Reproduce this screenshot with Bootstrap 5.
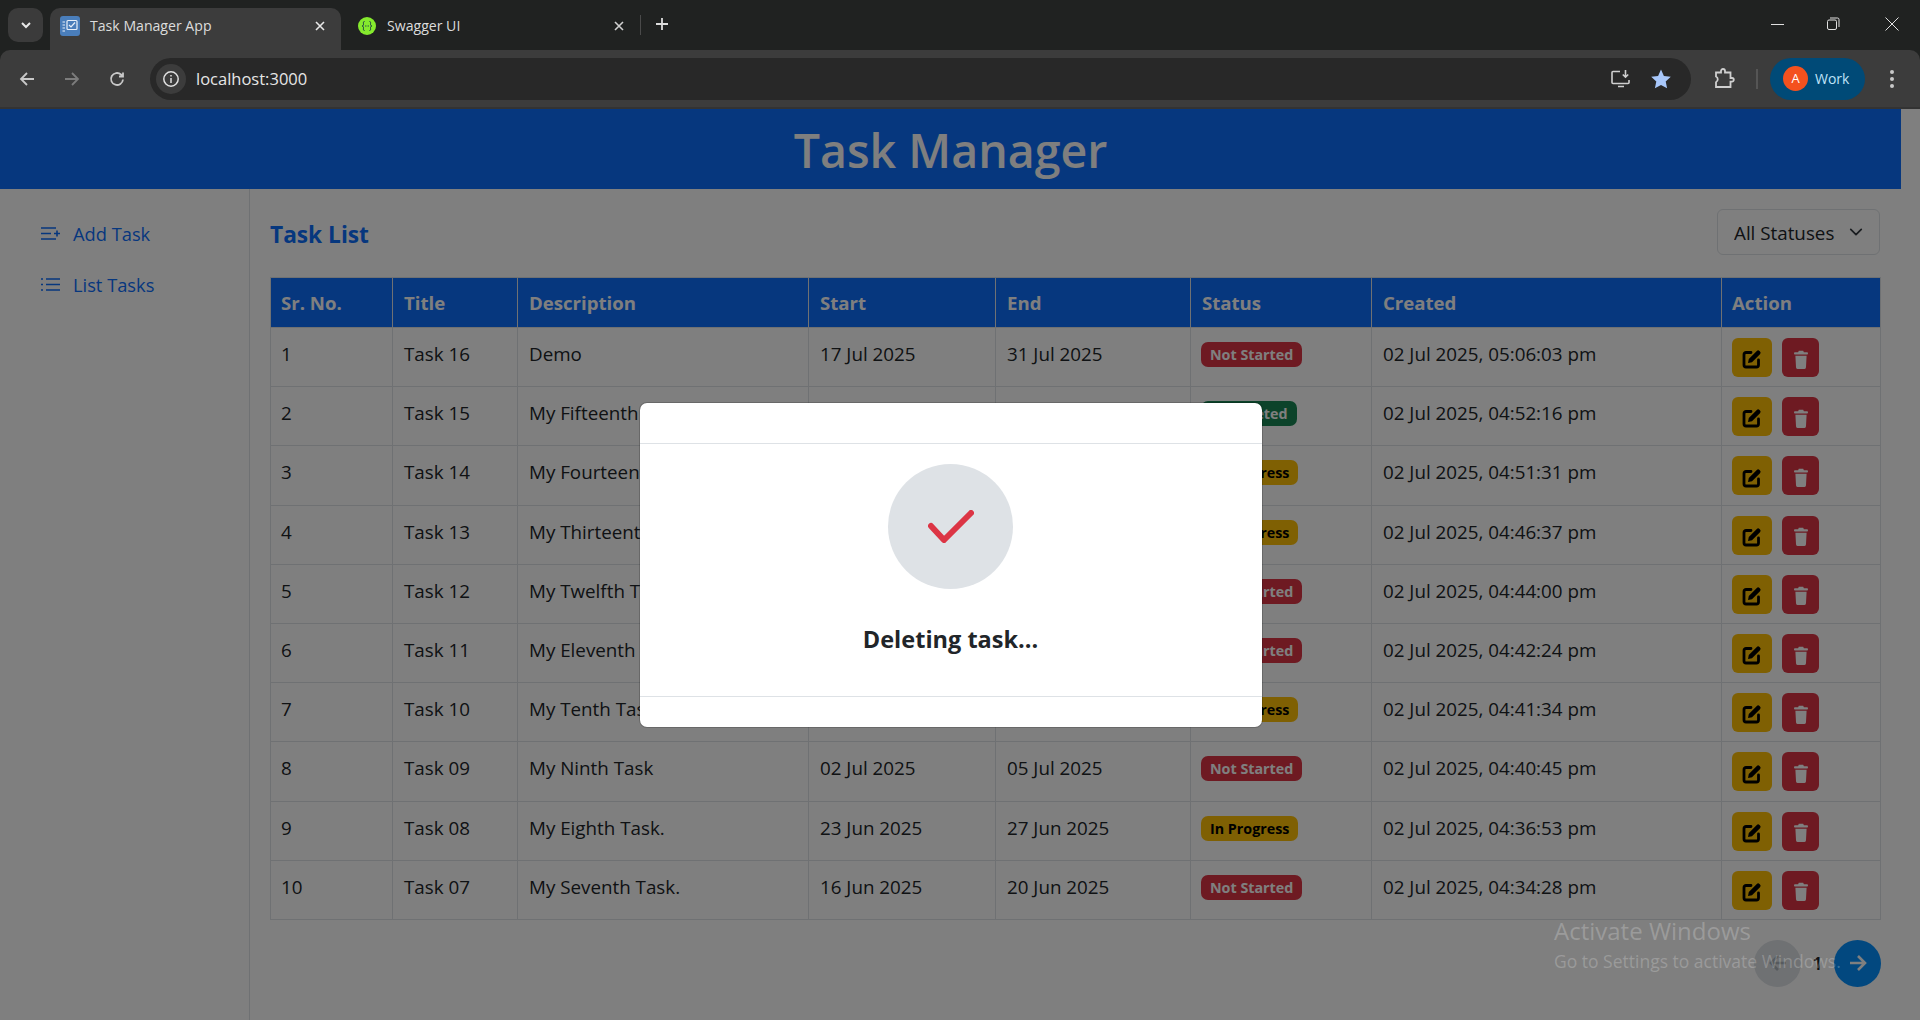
<!DOCTYPE html>
<html lang="en">
<head>
    <meta charset="UTF-8">
    <meta name="viewport" content="width=device-width, initial-scale=1.0">
    <title>Task Manager App</title>
    <link href="https://cdn.jsdelivr.net/npm/bootstrap@5.3.0/dist/css/bootstrap.min.css" rel="stylesheet">
    <style>
        html, body {
            height: 100%;
            overflow: hidden;
        }

        body {
            font-family: "Open Sans", "Liberation Sans", sans-serif;
            font-size: 18.8px;
            background: #202221;
        }

        /* browser frame */
        .tab-strip {
            height: 50px;
            background: #202221;
            color: #dcdcdc;
            font-size: 14.1px;
            padding-left: 8px;
        }

        .tab-menu {
            width: 35px;
            height: 34px;
            margin-top: 8px;
            border-radius: 10px;
            background: #3b3b3b;
        }

        .tab-item {
            width: 291px;
            height: 42px;
            margin-top: 8px;
            padding: 0 15px 6px 10px;
        }

        .tab-active {
            margin-left: 7px;
            background: #3c3c3c;
            border-radius: 10px 10px 0 0;
        }

        .tab-second {
            width: 293px;
            padding-left: 17px;
            padding-right: 9px;
        }

        .tab-title {
            margin-left: 10px;
        }

        .tab-second .tab-title {
            margin-left: 11px;
        }

        .tab-favicon {
            width: 20px;
            height: 20px;
            border-radius: 3px;
            background: #4a7ebb;
        }

        .tab-divider {
            width: 1px;
            height: 20px;
            margin: 15px 8px 0 6px;
            background: #4a4a4a;
        }

        .tab-plus {
            margin-top: 11px;
        }

        .win-buttons {
            margin-left: auto;
            gap: 41px;
            padding-right: 21px;
            margin-top: 17px;
        }

        .win-close {
            margin-left: 4px;
        }

        .tool-bar {
            height: 59px;
            background: #3c3c3c;
            border-bottom: 2px solid #333;
            border-radius: 10px 10px 0 0;
            padding: 0 16px 0 18px;
        }

        .tool-nav {
            gap: 27px;
            width: 132px;
        }

        .omnibox {
            width: 1541px;
            height: 42px;
            border-radius: 21px;
            background: #282828;
            color: #e6e6e6;
            font-size: 16.5px;
            padding: 0 19px 0 6px;
        }

        .omni-text {
            padding-top: 1px;
        }

        .info-chip {
            width: 30px;
            height: 30px;
            border-radius: 50%;
            background: #3c3c3c;
            margin-right: 10px;
        }

        .omni-right {
            margin-left: auto;
            gap: 18px;
        }

        .ext-icon {
            margin-left: 22px;
        }

        .tool-sep {
            width: 2px;
            height: 20px;
            margin: 0 12px 0 21px;
            background: #555;
        }

        .work-pill {
            width: 95px;
            height: 42px;
            border-radius: 21px;
            background: #004a77;
            color: #bfe3f7;
            font-size: 14px;
            padding-left: 13px;
            gap: 7px;
        }

        .work-avatar {
            width: 25px;
            height: 25px;
            border-radius: 50%;
            background: #f4511e;
            color: #fff;
            font-size: 13px;
        }

        .more-dots {
            margin-left: 24px;
        }

        /* the page itself */
        .page-view {
            position: relative;
            height: 911px;
            overflow: hidden;
            padding-right: 19px;
            background: #fff;
        }

        .page-head {
            height: 80px;
            padding-top: 4px;
            font-size: 46.5px;
            font-weight: 600;
        }

        .page-head h1 {
            font-size: inherit;
            font-weight: inherit;
            margin: 0;
        }

        .side-col {
            width: 250px;
            flex: none;
            padding-top: 19px;
            height: 831px;
        }

        .side-link {
            height: 51px;
            padding-left: 41px;
            gap: 13px;
            font-size: 18.3px;
        }

        .main-col {
            padding: 20px 21px 0 20px;
            min-width: 0;
        }

        .list-title {
            font-size: 22.7px;
            font-weight: 700;
            margin: 0;
            padding-top: 5px;
        }

        .status-filter {
            width: 163px;
            height: 46px;
            font-size: 18.8px;
            padding: 3px 36px 0 16px;
            background-position: right 14px center;
            background-size: 18px 14px;
        }

        .task-table {
            table-layout: fixed;
            margin: 22px 0 20px;
            --bs-table-border-color: #dee2e6;
        }

        .task-table th {
            height: 50px;
            padding: 0 10px 0 11px;
            vertical-align: middle;
            background: #0d6efd;
            color: #fff;
            font-size: 18.6px;
            font-weight: 700;
        }

        .task-table td {
            height: 59.2px;
            padding: 12px 10px 0 11px;
            vertical-align: top;
            font-size: 18.8px;
            line-height: 28px;
            white-space: nowrap;
            overflow: hidden;
        }

        .task-table th:first-child,
        .task-table td:first-child {
            padding-left: 10px;
        }

        .task-table td.action-cell {
            padding-top: 10px;
            padding-left: 10px;
            line-height: 0;
        }

        .task-table th:last-child {
            padding-left: 10px;
        }

        .task-badge {
            font-size: 14.3px;
            padding: 0 9px;
            line-height: 25px;
            height: 25px;
            margin-top: 2px;
            margin-left: -1px;
            border-radius: 7px;
            vertical-align: top;
        }

        .act-btn {
            height: 39px;
            padding: 0;
            margin-right: 10px;
            border: 0;
            border-radius: 6px;
            vertical-align: top;
        }

        .act-edit {
            width: 40px;
        }

        .act-del {
            width: 37px;
        }

        .pager {
            gap: 11px;
            margin-right: -1px;
        }

        .pager-btn {
            width: 47px;
            height: 47px;
            border-radius: 50%;
            border: 0;
            padding: 0;
        }

        .pager-prev {
            background: #dee2e6;
        }

        .pager-next {
            background: #0490ff;
        }

        /* modal sits inside the page area, not the window */
        .page-view .modal-backdrop {
            position: absolute;
            width: 100%;
            height: 100%;
        }

        .page-view .modal {
            position: absolute;
            padding-right: 19px;
        }

        .page-view .modal-dialog {
            max-width: 624px;
            width: 624px;
            height: 100%;
            min-height: 0;
            margin: 0 auto;
        }

        .delete-head {
            height: 41px;
            padding: 0;
        }

        .delete-body {
            height: 252px;
            flex: none;
            padding: 20px 0 0;
        }

        .delete-foot {
            height: 31px;
            padding: 0;
        }

        .delete-circle {
            width: 125px;
            height: 125px;
            border-radius: 50%;
            background: #dee2e6;
        }

        .delete-text {
            margin: 33px 0 0;
            font-size: 23.5px;
            line-height: 35px;
            font-weight: 700;
            color: #212529;
        }

        .activate-note {
            position: absolute;
            left: 1554px;
            top: 804px;
            z-index: 2000;
            color: rgba(255, 255, 255, .22);
            font-size: 17.5px;
            line-height: 26px;
            white-space: nowrap;
            pointer-events: none;
        }

        .activate-note div:first-child {
            font-size: 24px;
            line-height: 35px;
        }
    </style>
</head>
<body>
    <svg width="0" height="0" class="d-block">
        <symbol id="ico-edit" viewBox="0 0 20 20">
            <path d="M9 3.5H4A2 2 0 0 0 2 5.5V16a2 2 0 0 0 2 2h10.500a2 2 0 0 0 2-2v-5" fill="none" stroke="currentColor" stroke-width="2.8" stroke-linecap="round"/>
            <path d="M6 14l.8-4L14.800 2a1.900 1.900 0 0 1 2.700 0l.5.5a1.900 1.900 0 0 1 0 2.700L10 13.200z" fill="currentColor"/>
        </symbol>
        <symbol id="ico-trash" viewBox="0 0 16 18" preserveAspectRatio="none">
            <path d="M5.5.8h5L11.300 2.200H15a1 1 0 0 1 0 2H1a1 1 0 0 1 0-2h3.700z" fill="currentColor"/>
            <path d="M1.600 5.400h12.800l-.7 10.900A1.700 1.700 0 0 1 12 18H4a1.700 1.700 0 0 1-1.700-1.700z" fill="currentColor"/>
        </symbol>
    </svg>

    <!-- browser frame -->
    <div class="tab-strip d-flex align-items-start">
        <div class="tab-menu d-flex align-items-center justify-content-center">
            <svg width="12" height="12" viewBox="0 0 12 12"><path d="M2 4l4 4 4-4" fill="none" stroke="#e8e8e8" stroke-width="2"/></svg>
        </div>
        <div class="tab-item tab-active d-flex align-items-center">
            <span class="tab-favicon d-flex align-items-center justify-content-center">
                <svg width="18" height="18" viewBox="0 0 18 18" fill="none" stroke="#e8f0fa" stroke-width="1.2"><path d="M1.5 5h2.5M1.5 8h2.5M1.5 11h2.5M1.5 14h2.5"/><rect x="6" y="3.5" width="10" height="9" rx="1"/><path d="M8 8l2 2 4-4.500"/></svg>
            </span>
            <span class="tab-title">Task Manager App</span>
            <svg class="ms-auto" width="12" height="12" viewBox="0 0 12 12"><path d="M2 2l8 8M10 2l-8 8" stroke="#e8e8e8" stroke-width="1.6"/></svg>
        </div>
        <div class="tab-item tab-second d-flex align-items-center">
            <svg width="18" height="18" viewBox="0 0 18 18"><circle cx="9" cy="9" r="9" fill="#85ea2d"/><path d="M6.500 4.500C5 4.500 5.500 6 5.500 7.500S4 9 4 9s1.500 0 1.500 1.500-.5 3 1 3M11.500 4.500c1.500 0 1 1.500 1 3S14 9 14 9s-1.500 0-1.500 1.500.5 3-1 3" fill="none" stroke="#173647" stroke-width="1"/><path d="M7 9h.8M8.600 9h.8M10.200 9h.8" stroke="#173647" stroke-width="1"/></svg>
            <span class="tab-title">Swagger UI</span>
            <svg class="ms-auto" width="12" height="12" viewBox="0 0 12 12"><path d="M2 2l8 8M10 2l-8 8" stroke="#d0d0d0" stroke-width="1.6"/></svg>
        </div>
        <div class="tab-divider"></div>
        <svg class="tab-plus" width="26" height="26" viewBox="0 0 26 26"><path d="M13 7v12M7 13h12" stroke="#dcdcdc" stroke-width="1.8"/></svg>
        <div class="win-buttons d-flex align-items-center">
            <svg width="14" height="14" viewBox="0 0 14 14"><path d="M0 7.500h13" stroke="#e0e0e0" stroke-width="1"/></svg>
            <svg width="14" height="14" viewBox="0 0 14 14" fill="none" stroke="#e0e0e0"><rect x="1.5" y="3" width="9" height="9.5" rx="1.5"/><path d="M4 1h7.500A1.500 1.500 0 0 1 13 2.500V10"/></svg>
            <svg class="win-close" width="14" height="14" viewBox="0 0 14 14"><path d="M.5.5l13 13M13.500.5l-13 13" stroke="#e0e0e0" stroke-width="1"/></svg>
        </div>
    </div>
    <div class="tool-bar d-flex align-items-center">
        <div class="tool-nav d-flex align-items-center">
            <svg width="18" height="18" viewBox="0 0 18 18" fill="none" stroke="#c8c8c8" stroke-width="1.8"><path d="M16 9H3M9 3L3 9l6 6"/></svg>
            <svg width="18" height="18" viewBox="0 0 18 18" fill="none" stroke="#7c7c7c" stroke-width="1.8"><path d="M2 9h13M9 3l6 6-6 6"/></svg>
            <svg width="18" height="18" viewBox="0 0 18 18" fill="none" stroke="#c8c8c8" stroke-width="1.8"><path d="M15 9.500A6 6 0 1 1 13 4.500L15 6.500M15 2.500v4h-4"/></svg>
        </div>
        <div class="omnibox d-flex align-items-center">
            <span class="info-chip d-flex align-items-center justify-content-center">
                <svg width="18" height="18" viewBox="0 0 18 18" fill="none" stroke="#e0e0e0" stroke-width="1.5"><circle cx="9" cy="9" r="7.2"/><path d="M9 8v5M9 5v1.500"/></svg>
            </span>
            <span class="omni-text">localhost:3000</span>
            <div class="omni-right d-flex align-items-center">
                <svg width="22" height="22" viewBox="0 0 22 22" fill="none" stroke="#cfcfcf" stroke-width="1.6"><path d="M10 3.500H3A1 1 0 0 0 2 4.500v10a1 1 0 0 0 1 1h15a1 1 0 0 0 1-1V12M8 18.500h6"/><path d="M15.500 2v7M12.800 6.500l2.700 2.700 2.700-2.700"/></svg>
                <svg width="22" height="22" viewBox="0 0 22 22"><path d="M11 1.500l2.900 6.400 6.900.8-5.100 4.700 1.400 6.900L11 16.900l-6.100 3.400 1.400-6.900L1.200 8.700l6.900-.8z" fill="#a8c7fa"/></svg>
            </div>
        </div>
        <svg class="ext-icon" width="22" height="22" viewBox="0 0 22 22" fill="none" stroke="#cfcfcf" stroke-width="1.8"><path d="M3 4.500h5V3a2 2 0 0 1 4 0v1.500h5.500V10H19a1.800 1.800 0 0 1 0 3.600h-1.500V19H3v-4.800a3.200 3.200 0 0 0 0-5.700z"/></svg>
        <div class="tool-sep"></div>
        <div class="work-pill d-flex align-items-center">
            <span class="work-avatar d-flex align-items-center justify-content-center">A</span>
            <span>Work</span>
        </div>
        <svg class="more-dots" width="6" height="20" viewBox="0 0 6 20" fill="#c8c8c8"><circle cx="3" cy="3" r="2"/><circle cx="3" cy="10" r="2"/><circle cx="3" cy="17" r="2"/></svg>
    </div>

    <!-- page -->
    <div class="page-view">
        <header class="page-head bg-primary text-white d-flex align-items-center justify-content-center">
            <h1>Task Manager</h1>
        </header>
        <div class="d-flex">
            <nav class="side-col border-end">
                <a href="#" class="side-link d-flex align-items-center text-primary text-decoration-none">
                    <svg width="19" height="15" viewBox="0 0 19 15" fill="none" stroke="currentColor" stroke-width="1.6"><path d="M0 2h15M0 7.500h10M0 13h15M13 7.500h6M16 4.500v6"/></svg>
                    <span>Add Task</span>
                </a>
                <a href="#" class="side-link d-flex align-items-center text-primary text-decoration-none">
                    <svg width="19" height="15" viewBox="0 0 19 15" fill="none" stroke="currentColor" stroke-width="1.6"><path d="M5 2h14M5 7.500h14M5 13h14M0 2h2M0 7.500h2M0 13h2"/></svg>
                    <span>List Tasks</span>
                </a>
            </nav>
            <main class="main-col flex-grow-1">
                <div class="d-flex align-items-center justify-content-between">
                    <h2 class="list-title text-primary">Task List</h2>
                    <select class="form-select status-filter">
                        <option>All Statuses</option>
                        <option>Not Started</option>
                        <option>In Progress</option>
                        <option>Completed</option>
                    </select>
                </div>
                <table class="table table-bordered task-table">
                    <colgroup>
                        <col width="122"><col width="125"><col width="291"><col width="187"><col width="195"><col width="181"><col width="350"><col width="159">
                    </colgroup>
                    <thead>
                        <tr><th>Sr. No.</th><th>Title</th><th>Description</th><th>Start</th><th>End</th><th>Status</th><th>Created</th><th>Action</th></tr>
                    </thead>
                    <tbody id="taskRows"></tbody>
                </table>
                <div class="pager d-flex align-items-center justify-content-end">
                    <button class="pager-btn pager-prev d-flex align-items-center justify-content-center">
                        <svg width="20" height="20" viewBox="0 0 20 20" fill="none" stroke="#adb5bd" stroke-width="2.6"><path d="M18 10H3M10 3l-7 7 7 7"/></svg>
                    </button>
                    <span class="fw-semibold">1</span>
                    <button class="pager-btn pager-next d-flex align-items-center justify-content-center">
                        <svg width="20" height="20" viewBox="0 0 20 20" fill="none" stroke="#fff" stroke-width="2.6"><path d="M2 10h15M10 3l7 7-7 7"/></svg>
                    </button>
                </div>
            </main>
        </div>

        <div class="modal-backdrop fade show"></div>
        <div class="modal fade show d-block" tabindex="-1">
            <div class="modal-dialog modal-dialog-centered">
                <div class="modal-content">
                    <div class="modal-header delete-head"></div>
                    <div class="modal-body delete-body d-flex flex-column align-items-center">
                        <div class="delete-circle d-flex align-items-center justify-content-center">
                            <svg width="46" height="33" viewBox="0 0 46 33" fill="none" stroke="#dc3545" stroke-width="6" stroke-linecap="round" stroke-linejoin="round"><path d="M3 16l13 14L43 3"/></svg>
                        </div>
                        <p class="delete-text">Deleting task...</p>
                    </div>
                    <div class="modal-footer delete-foot"></div>
                </div>
            </div>
        </div>

        <div class="activate-note">
            <div>Activate Windows</div>
            <div>Go to Settings to activate Windows.</div>
        </div>
    </div>

    <script src="https://cdn.jsdelivr.net/npm/bootstrap@5.3.0/dist/js/bootstrap.bundle.min.js"></script>
    <script>
        const statusClass = {
            'Not Started': 'text-bg-danger',
            'In Progress': 'text-bg-warning',
            'Completed': 'text-bg-success'
        };

        const tasks = [
            ['Task 16', 'Demo', '17 Jul 2025', '31 Jul 2025', 'Not Started', '05:06:03'],
            ['Task 15', 'My Fifteenth Task.', '01 Jul 2025', '03 Jul 2025', 'Completed', '04:52:16'],
            ['Task 14', 'My Fourteenth Task.', '30 Jun 2025', '02 Jul 2025', 'In Progress', '04:51:31'],
            ['Task 13', 'My Thirteenth Task.', '29 Jun 2025', '01 Jul 2025', 'In Progress', '04:46:37'],
            ['Task 12', 'My Twelfth Task.', '28 Jun 2025', '30 Jun 2025', 'Not Started', '04:44:00'],
            ['Task 11', 'My Eleventh Task.', '27 Jun 2025', '29 Jun 2025', 'Not Started', '04:42:24'],
            ['Task 10', 'My Tenth Task.', '26 Jun 2025', '28 Jun 2025', 'In Progress', '04:41:34'],
            ['Task 09', 'My Ninth Task', '02 Jul 2025', '05 Jul 2025', 'Not Started', '04:40:45'],
            ['Task 08', 'My Eighth Task.', '23 Jun 2025', '27 Jun 2025', 'In Progress', '04:36:53'],
            ['Task 07', 'My Seventh Task.', '16 Jun 2025', '20 Jun 2025', 'Not Started', '04:34:28']
        ];

        document.getElementById('taskRows').innerHTML = tasks.map((t, i) => `
            <tr>
                <td>${i + 1}</td>
                <td>${t[0]}</td>
                <td>${t[1]}</td>
                <td>${t[2]}</td>
                <td>${t[3]}</td>
                <td><span class="badge task-badge ${statusClass[t[4]]}">${t[4]}</span></td>
                <td>02 Jul 2025, ${t[5]} pm</td>
                <td class="action-cell">
                    <button class="btn btn-warning act-btn act-edit"><svg width="20" height="20"><use href="#ico-edit"/></svg></button><button class="btn btn-danger act-btn act-del"><svg width="14" height="19"><use href="#ico-trash"/></svg></button>
                </td>
            </tr>`).join('');
    </script>
</body>
</html>
